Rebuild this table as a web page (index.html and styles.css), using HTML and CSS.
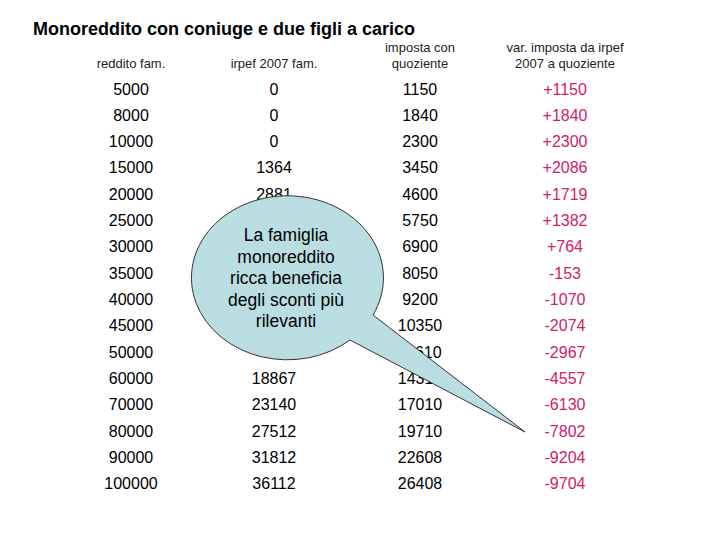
FILE: index.html
```html
<!DOCTYPE html>
<html lang="it">
<head>
<meta charset="utf-8">
<title>Monoreddito</title>
<link rel="stylesheet" href="styles.css">
</head>
<body>
<div class="page">
  <h1 class="title">Monoreddito con coniuge e due figli a carico</h1>
  <div class="table">
    <div class="row head">
      <div>reddito fam.</div>
      <div>irpef 2007 fam.</div>
      <div>imposta con<br>quoziente</div>
      <div>var. imposta da irpef<br>2007 a quoziente</div>
    </div>
    <div class="row"><div>5000</div><div>0</div><div>1150</div><div class="var">+1150</div></div>
    <div class="row"><div>8000</div><div>0</div><div>1840</div><div class="var">+1840</div></div>
    <div class="row"><div>10000</div><div>0</div><div>2300</div><div class="var">+2300</div></div>
    <div class="row"><div>15000</div><div>1364</div><div>3450</div><div class="var">+2086</div></div>
    <div class="row"><div>20000</div><div>2881</div><div>4600</div><div class="var">+1719</div></div>
    <div class="row"><div>25000</div><div></div><div>5750</div><div class="var">+1382</div></div>
    <div class="row"><div>30000</div><div></div><div>6900</div><div class="var">+764</div></div>
    <div class="row"><div>35000</div><div></div><div>8050</div><div class="var">-153</div></div>
    <div class="row"><div>40000</div><div></div><div>9200</div><div class="var">-1070</div></div>
    <div class="row"><div>45000</div><div></div><div>10350</div><div class="var">-2074</div></div>
    <div class="row"><div>50000</div><div></div><div>11610</div><div class="var">-2967</div></div>
    <div class="row"><div>60000</div><div>18867</div><div>14310</div><div class="var">-4557</div></div>
    <div class="row"><div>70000</div><div>23140</div><div>17010</div><div class="var">-6130</div></div>
    <div class="row"><div>80000</div><div>27512</div><div>19710</div><div class="var">-7802</div></div>
    <div class="row"><div>90000</div><div>31812</div><div>22608</div><div class="var">-9204</div></div>
    <div class="row"><div>100000</div><div>36112</div><div>26408</div><div class="var">-9704</div></div>
  </div>
  <div class="callout">
    <svg class="bubble" width="720" height="540" viewBox="0 0 720 540">
      <path d="M373,315 A96,82 0 1,0 350,340 L525,432 Z" fill="#B9DDE1" stroke="#333" stroke-width="1"/>
    </svg>
    <div class="bubble-text">La famiglia<br>monoreddito<br>ricca beneficia<br>degli sconti più<br>rilevanti</div>
  </div>
</div>
</body>
</html>
```

FILE: styles.css
```css
html, body {
  margin: 0;
  padding: 0;
  background: #fff;
}
.page {
  position: relative;
  width: 720px;
  height: 540px;
  font-family: "Liberation Sans", Arial, sans-serif;
  color: #000;
  overflow: hidden;
}
.title {
  margin: 19px 0 0 33px;
  font-size: 18px;
  line-height: 20px;
  font-weight: bold;
}
.table {
  margin: 1px 0 0 61px;
  display: grid;
  grid-template-columns: 140px 146px 146px 144px;
  width: 576px;
}
.row {
  display: contents;
}
.row > div {
  text-align: center;
  font-size: 16px;
  line-height: 26.33px;
  height: 26.33px;
}
.head > div {
  font-size: 13px;
  line-height: 16px;
  height: 32px;
  color: #222;
  display: flex;
  flex-direction: column;
  justify-content: flex-end;
  margin-bottom: 4.5px;
}
.row > .var {
  color: #D0206A;
}
.callout {
  position: absolute;
  left: 0;
  top: 0;
  width: 720px;
  height: 540px;
}
.bubble {
  position: absolute;
  left: 0;
  top: 0;
}
.bubble-text {
  position: absolute;
  left: 206px;
  top: 225px;
  width: 160px;
  text-align: center;
  font-size: 17.5px;
  line-height: 21.6px;
  color: #000;
}
```
